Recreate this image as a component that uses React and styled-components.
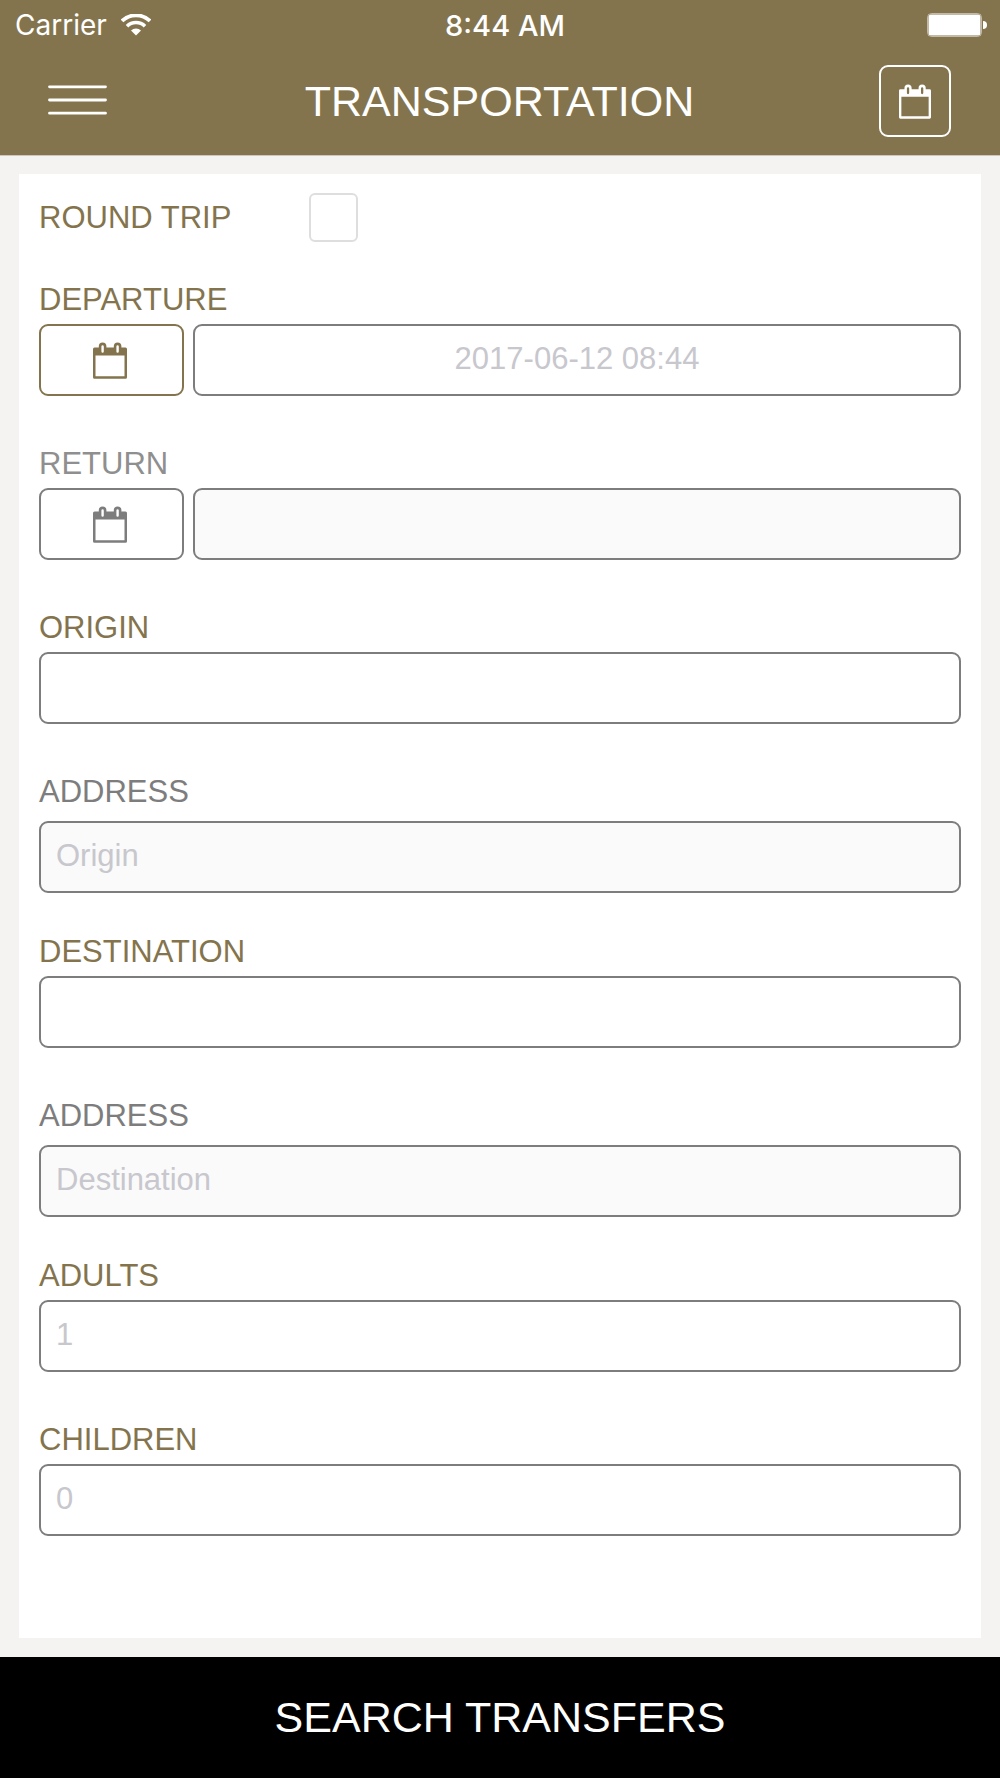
import React, { useState } from 'react';
import styled, { createGlobalStyle } from 'styled-components';

const gold = '#84744d';
const grey = '#7d7d7d';

const GlobalStyle = createGlobalStyle`
  * {
    box-sizing: border-box;
  }
  body {
    margin: 0;
    font-family: "Liberation Sans", Arial, sans-serif;
    background: #f5f3f2;
  }
`;

const Page = styled.div`
  display: flex;
  flex-direction: column;
  min-height: 100vh;
`;

const Header = styled.header`
  background: ${gold};
  color: #fff;
  border-bottom: 1px solid #cfc5bd;
`;

const StatusBar = styled.div`
  display: grid;
  grid-template-columns: 1fr auto 1fr;
  align-items: center;
  height: 50px;
  padding: 0 13px 0 15px;
  font-family: Inter, sans-serif;
  font-size: 28px;
`;

const Carrier = styled.div`
  display: flex;
  align-items: center;
  gap: 14px;
`;

const Time = styled.time`
  padding-left: 8px;
  font-size: 29px;
  font-weight: 500;
`;

const Battery = styled.svg`
  justify-self: end;
`;

const NavBar = styled.nav`
  display: grid;
  grid-template-columns: 72px 1fr 72px;
  align-items: center;
  padding: 15px 49px 18px 48px;
`;

const Title = styled.h1`
  margin: 0;
  font-size: 43px;
  line-height: 52px;
  font-weight: 400;
  text-align: center;
`;

const MenuButton = styled.button`
  display: flex;
  align-items: center;
  height: 72px;
  padding: 0 0 3px;
  border: 0;
  background: none;
  color: #fff;
`;

const IconButton = styled.button`
  display: flex;
  align-items: center;
  justify-content: center;
  flex: none;
  width: ${props => props.$wide ? '145px' : '72px'};
  height: 72px;
  padding: ${props => props.$wide ? '0 3px 0 0' : '0'};
  border: 2px solid ${props => props.$color};
  border-radius: 9px;
  background: none;
  color: ${props => props.$color};
`;

const Card = styled.form`
  flex: 1;
  margin: 18px 19px 19px;
  padding: 19px 20px 53px;
  background: #fff;
`;

const CheckRow = styled.div`
  display: flex;
  align-items: center;
  height: 49px;
  margin-bottom: 39px;
`;

const Label = styled.label`
  display: block;
  font-size: 31px;
  line-height: 38px;
  color: ${props => props.$color || gold};
`;

const CheckLabel = styled(Label)`
  width: 270px;
`;

const Checkbox = styled.input`
  appearance: none;
  width: 49px;
  height: 49px;
  margin: 0;
  border: 2px solid #dedede;
  border-radius: 6px;
  background: #fff;
  &:checked {
    background: ${gold};
  }
`;

const Field = styled.div`
  display: flex;
  flex-direction: column;
  gap: ${props => props.$address ? '10px' : '5px'};
  margin-bottom: ${props => props.$address ? '40px' : '49px'};
`;

const InputRow = styled.div`
  display: flex;
  gap: 9px;
`;

const Input = styled.input`
  flex: 1;
  min-width: 0;
  min-height: 72px;
  padding: 0 15px 2px;
  border: 2px solid ${grey};
  border-radius: 9px;
  background: #fff;
  color: #333;
  font-family: inherit;
  font-size: 31px;
  text-align: ${props => props.$center ? 'center' : 'left'};
  &::placeholder {
    color: #c7c7cd;
    opacity: 1;
  }
  &:disabled {
    background: #fafafa;
  }
`;

const SearchButton = styled.button`
  height: 121px;
  padding: 0 0 2px;
  border: 0;
  background: #000;
  color: #fff;
  font-family: inherit;
  font-size: 43px;
  line-height: 52px;
`;

function CalendarIcon({ width = 34 }) {
  return (
    <svg width={width} height={width + 3} viewBox="0 0 34 37" fill="currentColor" aria-hidden="true">
      <path
        fillRule="evenodd"
        d="M1.500 5.500H5.800V4.200a3.800 3.800 0 0 1 7.600 0V5.500H20.800V4.200a3.800 3.800 0 0 1 7.600 0V5.500H32.500a1.500 1.500 0 0 1 1.500 1.500V35.200a1.500 1.500 0 0 1-1.500 1.500H1.500a1.500 1.500 0 0 1-1.500-1.500V7a1.500 1.500 0 0 1 1.500-1.500ZM2.500 13.500V34.200H31.500V13.500ZM8.400 4.500V9.500a1.200 1.200 0 0 0 2.400 0V4.500a1.200 1.200 0 0 0-2.400 0ZM23.400 4.500V9.500a1.200 1.200 0 0 0 2.400 0V4.500a1.200 1.200 0 0 0-2.400 0Z"
      />
    </svg>
  );
}

function WifiIcon() {
  return (
    <svg width="30" height="22" viewBox="0 0 30 22" fill="none" stroke="#fff" aria-hidden="true">
      <path d="M1 7a20 20 0 0 1 28 0" strokeWidth="3.800" />
      <path d="M6 12.200a12.800 12.800 0 0 1 18 0" strokeWidth="3.600" />
      <path d="M15 21.500L10 16.500a7.200 7.200 0 0 1 10 0Z" fill="#fff" stroke="none" />
    </svg>
  );
}

function App() {
  const [roundTrip, setRoundTrip] = useState(false);

  return (
    <Page>
      <GlobalStyle />
      <Header>
        <StatusBar>
          <Carrier>
            Carrier
            <WifiIcon />
          </Carrier>
          <Time>8:44 AM</Time>
          <Battery width="60" height="24" viewBox="0 0 60 24" aria-hidden="true">
            <rect x="0.500" y="0.500" width="54" height="23" rx="4" fill="none" stroke="#fff" strokeOpacity="0.500" />
            <rect x="1.500" y="1.500" width="52" height="21" rx="2.500" fill="#fff" />
            <path d="M56 8a4 4 0 0 1 0 8Z" fill="#fff" />
          </Battery>
        </StatusBar>
        <NavBar>
          <MenuButton type="button" aria-label="Menu">
            <svg width="59" height="30" viewBox="0 0 59 30" stroke="currentColor" strokeWidth="2.800" strokeLinecap="round">
              <path d="M1.500 1.800H57.500M1.500 15H57.500M1.500 28.200H57.500" />
            </svg>
          </MenuButton>
          <Title>TRANSPORTATION</Title>
          <IconButton type="button" $color="#fff" aria-label="Bookings">
            <CalendarIcon width={32} />
          </IconButton>
        </NavBar>
      </Header>

      <Card id="transfer-form">
        <CheckRow>
          <CheckLabel htmlFor="roundTrip">ROUND TRIP</CheckLabel>
          <Checkbox
            id="roundTrip"
            type="checkbox"
            checked={roundTrip}
            onChange={e => setRoundTrip(e.target.checked)}
          />
        </CheckRow>

        <Field>
          <Label htmlFor="departure">DEPARTURE</Label>
          <InputRow>
            <IconButton type="button" $wide $color={gold} aria-label="Pick departure date">
              <CalendarIcon />
            </IconButton>
            <Input id="departure" $center placeholder="2017-06-12 08:44" />
          </InputRow>
        </Field>

        <Field>
          <Label htmlFor="return" $color="#8f8f8f">RETURN</Label>
          <InputRow>
            <IconButton type="button" $wide $color={grey} aria-label="Pick return date">
              <CalendarIcon />
            </IconButton>
            <Input id="return" $center disabled={!roundTrip} />
          </InputRow>
        </Field>

        <Field>
          <Label htmlFor="origin">ORIGIN</Label>
          <Input id="origin" />
        </Field>

        <Field $address>
          <Label htmlFor="originAddress" $color={grey}>ADDRESS</Label>
          <Input id="originAddress" placeholder="Origin" disabled />
        </Field>

        <Field>
          <Label htmlFor="destination">DESTINATION</Label>
          <Input id="destination" />
        </Field>

        <Field $address>
          <Label htmlFor="destinationAddress" $color={grey}>ADDRESS</Label>
          <Input id="destinationAddress" placeholder="Destination" disabled />
        </Field>

        <Field>
          <Label htmlFor="adults">ADULTS</Label>
          <Input id="adults" inputMode="numeric" placeholder="1" />
        </Field>

        <Field>
          <Label htmlFor="children">CHILDREN</Label>
          <Input id="children" inputMode="numeric" placeholder="0" />
        </Field>
      </Card>

      <SearchButton type="submit" form="transfer-form">SEARCH TRANSFERS</SearchButton>
    </Page>
  );
}

export default App;
